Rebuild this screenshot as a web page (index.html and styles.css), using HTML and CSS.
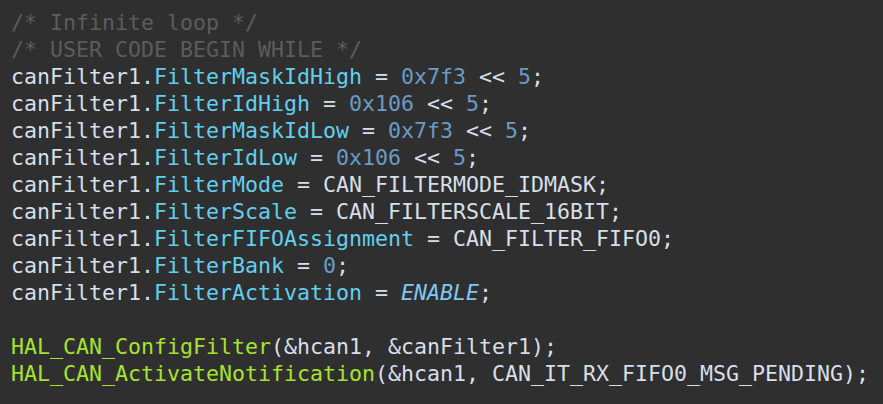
FILE: index.html
```html
<!DOCTYPE html>
<html>
<head>
<meta charset="utf-8">
<link rel="stylesheet" href="styles.css">
</head>
<body>
<pre class="code"><span class="cm">/* Infinite loop */</span>
<span class="cm">/* USER CODE BEGIN WHILE */</span>
canFilter1.<span class="fd">FilterMaskIdHigh</span> = <span class="num">0x7f3</span> &lt;&lt; <span class="num">5</span>;
canFilter1.<span class="fd">FilterIdHigh</span> = <span class="num">0x106</span> &lt;&lt; <span class="num">5</span>;
canFilter1.<span class="fd">FilterMaskIdLow</span> = <span class="num">0x7f3</span> &lt;&lt; <span class="num">5</span>;
canFilter1.<span class="fd">FilterIdLow</span> = <span class="num">0x106</span> &lt;&lt; <span class="num">5</span>;
canFilter1.<span class="fd">FilterMode</span> = CAN_FILTERMODE_IDMASK;
canFilter1.<span class="fd">FilterScale</span> = CAN_FILTERSCALE_16BIT;
canFilter1.<span class="fd">FilterFIFOAssignment</span> = CAN_FILTER_FIFO0;
canFilter1.<span class="fd">FilterBank</span> = <span class="num">0</span>;
canFilter1.<span class="fd">FilterActivation</span> = <span class="en">ENABLE</span>;

<span class="fn">HAL_CAN_ConfigFilter</span>(&amp;hcan1, &amp;canFilter1);
<span class="fn">HAL_CAN_ActivateNotification</span>(&amp;hcan1, CAN_IT_RX_FIFO0_MSG_PENDING);</pre>
</body>
</html>
```
FILE: styles.css
```css
html, body {
  margin: 0;
  padding: 0;
  background: #2f2f2f;
  height: 100%;
}
.code {
  margin: 0;
  padding: 9px 0 0 11px;
  font-family: "DejaVu Sans Mono", "Liberation Mono", monospace;
  font-size: 21.6px;
  line-height: 27px;
  color: #d6dfea;
  white-space: pre;
}
.cm { color: #5c5c5c; }
.fd { color: #62cfee; }
.num { color: #6a9bc5; }
.fn { color: #a6e22e; }
.en { color: #7fc8f2; font-style: italic; }
```
